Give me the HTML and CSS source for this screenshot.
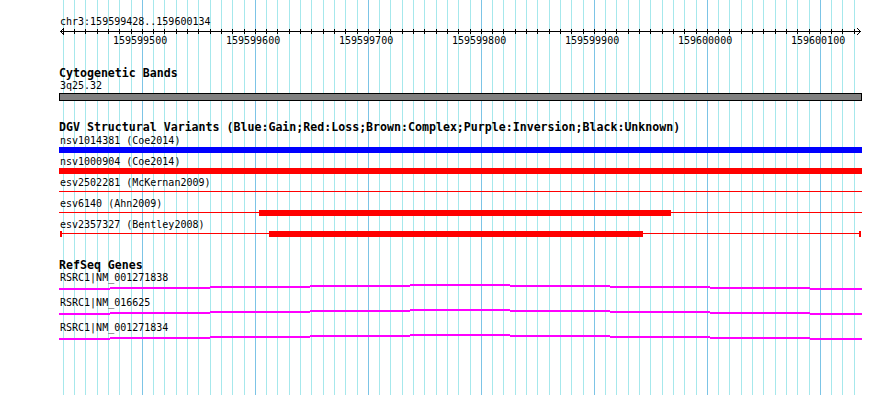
FILE: index.html
```html
<!DOCTYPE html>
<html>
<head>
<meta charset="utf-8">
<link rel="stylesheet" href="styles.css">
</head>
<body>
<div class="panel">
  <svg class="grid" width="890" height="395" shape-rendering="crispEdges">
    <g class="minor">
      <rect x="63" y="0" width="1" height="395"/><rect x="74" y="0" width="1" height="395"/><rect x="85" y="0" width="1" height="395"/><rect x="97" y="0" width="1" height="395"/><rect x="108" y="0" width="1" height="395"/><rect x="119" y="0" width="1" height="395"/><rect x="131" y="0" width="1" height="395"/>
      <rect x="153" y="0" width="1" height="395"/><rect x="164" y="0" width="1" height="395"/><rect x="176" y="0" width="1" height="395"/><rect x="187" y="0" width="1" height="395"/><rect x="198" y="0" width="1" height="395"/><rect x="210" y="0" width="1" height="395"/><rect x="221" y="0" width="1" height="395"/><rect x="232" y="0" width="1" height="395"/><rect x="244" y="0" width="1" height="395"/>
      <rect x="266" y="0" width="1" height="395"/><rect x="277" y="0" width="1" height="395"/><rect x="289" y="0" width="1" height="395"/><rect x="300" y="0" width="1" height="395"/><rect x="311" y="0" width="1" height="395"/><rect x="323" y="0" width="1" height="395"/><rect x="334" y="0" width="1" height="395"/><rect x="345" y="0" width="1" height="395"/><rect x="357" y="0" width="1" height="395"/>
      <rect x="379" y="0" width="1" height="395"/><rect x="390" y="0" width="1" height="395"/><rect x="402" y="0" width="1" height="395"/><rect x="413" y="0" width="1" height="395"/><rect x="424" y="0" width="1" height="395"/><rect x="436" y="0" width="1" height="395"/><rect x="447" y="0" width="1" height="395"/><rect x="458" y="0" width="1" height="395"/><rect x="470" y="0" width="1" height="395"/>
      <rect x="492" y="0" width="1" height="395"/><rect x="503" y="0" width="1" height="395"/><rect x="515" y="0" width="1" height="395"/><rect x="526" y="0" width="1" height="395"/><rect x="537" y="0" width="1" height="395"/><rect x="549" y="0" width="1" height="395"/><rect x="560" y="0" width="1" height="395"/><rect x="571" y="0" width="1" height="395"/><rect x="583" y="0" width="1" height="395"/>
      <rect x="605" y="0" width="1" height="395"/><rect x="616" y="0" width="1" height="395"/><rect x="628" y="0" width="1" height="395"/><rect x="639" y="0" width="1" height="395"/><rect x="650" y="0" width="1" height="395"/><rect x="662" y="0" width="1" height="395"/><rect x="673" y="0" width="1" height="395"/><rect x="684" y="0" width="1" height="395"/><rect x="696" y="0" width="1" height="395"/>
      <rect x="718" y="0" width="1" height="395"/><rect x="729" y="0" width="1" height="395"/><rect x="741" y="0" width="1" height="395"/><rect x="752" y="0" width="1" height="395"/><rect x="763" y="0" width="1" height="395"/><rect x="775" y="0" width="1" height="395"/><rect x="786" y="0" width="1" height="395"/><rect x="797" y="0" width="1" height="395"/><rect x="809" y="0" width="1" height="395"/>
      <rect x="831" y="0" width="1" height="395"/><rect x="842" y="0" width="1" height="395"/><rect x="854" y="0" width="1" height="395"/>
    </g>
    <g class="major">
      <rect x="142" y="0" width="1" height="395"/><rect x="255" y="0" width="1" height="395"/><rect x="368" y="0" width="1" height="395"/><rect x="481" y="0" width="1" height="395"/><rect x="594" y="0" width="1" height="395"/><rect x="707" y="0" width="1" height="395"/><rect x="820" y="0" width="1" height="395"/>
    </g>
  </svg>

  <div class="content">
    <div class="chr">chr3:159599428..159600134</div>
    <svg class="ruler" width="890" height="20" shape-rendering="crispEdges">
      <g class="axis">
        <rect x="60" y="3" width="801" height="1"/>
        <rect x="61" y="2" width="1" height="3"/><rect x="62" y="1" width="1" height="1"/><rect x="62" y="5" width="1" height="1"/><rect x="63" y="0" width="1" height="1"/><rect x="63" y="6" width="1" height="1"/>
        <rect x="859" y="2" width="1" height="3"/><rect x="858" y="1" width="1" height="1"/><rect x="858" y="5" width="1" height="1"/><rect x="857" y="0" width="1" height="1"/><rect x="857" y="6" width="1" height="1"/>
      </g>
      <g class="ticks">
        <rect x="63" y="1" width="1" height="5"/><rect x="74" y="1" width="1" height="5"/><rect x="85" y="1" width="1" height="5"/><rect x="97" y="1" width="1" height="5"/><rect x="108" y="1" width="1" height="5"/><rect x="119" y="1" width="1" height="5"/><rect x="131" y="1" width="1" height="5"/><rect x="142" y="1" width="1" height="5"/>
        <rect x="153" y="1" width="1" height="5"/><rect x="164" y="1" width="1" height="5"/><rect x="176" y="1" width="1" height="5"/><rect x="187" y="1" width="1" height="5"/><rect x="198" y="1" width="1" height="5"/><rect x="210" y="1" width="1" height="5"/><rect x="221" y="1" width="1" height="5"/><rect x="232" y="1" width="1" height="5"/><rect x="244" y="1" width="1" height="5"/><rect x="255" y="1" width="1" height="5"/>
        <rect x="266" y="1" width="1" height="5"/><rect x="277" y="1" width="1" height="5"/><rect x="289" y="1" width="1" height="5"/><rect x="300" y="1" width="1" height="5"/><rect x="311" y="1" width="1" height="5"/><rect x="323" y="1" width="1" height="5"/><rect x="334" y="1" width="1" height="5"/><rect x="345" y="1" width="1" height="5"/><rect x="357" y="1" width="1" height="5"/><rect x="368" y="1" width="1" height="5"/>
        <rect x="379" y="1" width="1" height="5"/><rect x="390" y="1" width="1" height="5"/><rect x="402" y="1" width="1" height="5"/><rect x="413" y="1" width="1" height="5"/><rect x="424" y="1" width="1" height="5"/><rect x="436" y="1" width="1" height="5"/><rect x="447" y="1" width="1" height="5"/><rect x="458" y="1" width="1" height="5"/><rect x="470" y="1" width="1" height="5"/><rect x="481" y="1" width="1" height="5"/>
        <rect x="492" y="1" width="1" height="5"/><rect x="503" y="1" width="1" height="5"/><rect x="515" y="1" width="1" height="5"/><rect x="526" y="1" width="1" height="5"/><rect x="537" y="1" width="1" height="5"/><rect x="549" y="1" width="1" height="5"/><rect x="560" y="1" width="1" height="5"/><rect x="571" y="1" width="1" height="5"/><rect x="583" y="1" width="1" height="5"/><rect x="594" y="1" width="1" height="5"/>
        <rect x="605" y="1" width="1" height="5"/><rect x="616" y="1" width="1" height="5"/><rect x="628" y="1" width="1" height="5"/><rect x="639" y="1" width="1" height="5"/><rect x="650" y="1" width="1" height="5"/><rect x="662" y="1" width="1" height="5"/><rect x="673" y="1" width="1" height="5"/><rect x="684" y="1" width="1" height="5"/><rect x="696" y="1" width="1" height="5"/><rect x="707" y="1" width="1" height="5"/>
        <rect x="718" y="1" width="1" height="5"/><rect x="729" y="1" width="1" height="5"/><rect x="741" y="1" width="1" height="5"/><rect x="752" y="1" width="1" height="5"/><rect x="763" y="1" width="1" height="5"/><rect x="775" y="1" width="1" height="5"/><rect x="786" y="1" width="1" height="5"/><rect x="797" y="1" width="1" height="5"/><rect x="809" y="1" width="1" height="5"/><rect x="820" y="1" width="1" height="5"/>
        <rect x="831" y="1" width="1" height="5"/><rect x="842" y="1" width="1" height="5"/><rect x="854" y="1" width="1" height="5"/>
      </g>
      <g class="ticklabels">
        <text x="113" y="16">159599500</text>
        <text x="226" y="16">159599600</text>
        <text x="339" y="16">159599700</text>
        <text x="452" y="16">159599800</text>
        <text x="565" y="16">159599900</text>
        <text x="678" y="16">159600000</text>
        <text x="791" y="16">159600100</text>
      </g>
    </svg>

    <div class="track cyto">
      <div class="title">Cytogenetic Bands</div>
      <div class="label">3q25.32</div>
      <div class="band"></div>
    </div>

    <div class="track dgv">
      <div class="title">DGV Structural Variants (Blue:Gain;Red:Loss;Brown:Complex;Purple:Inversion;Black:Unknown)</div>
      <div class="feat">
        <div class="label">nsv1014381 (Coe2014)</div>
        <div class="lane"><div class="bar gain" style="margin-left:0px;width:803px"></div></div>
      </div>
      <div class="feat">
        <div class="label">nsv1000904 (Coe2014)</div>
        <div class="lane"><div class="bar loss" style="margin-left:0px;width:803px"></div></div>
      </div>
      <div class="feat">
        <div class="label">esv2502281 (McKernan2009)</div>
        <div class="lane thin"></div>
      </div>
      <div class="feat">
        <div class="label">esv6140 (Ahn2009)</div>
        <div class="lane thin"><div class="bar loss" style="margin-left:200px;width:412px"></div></div>
      </div>
      <div class="feat">
        <div class="label">esv2357327 (Bentley2008)</div>
        <div class="lane capped"><div class="bar loss" style="margin-left:210px;width:374px"></div></div>
      </div>
    </div>

    <div class="track refseq">
      <div class="title">RefSeq Genes</div>
      <div class="gene">
        <div class="label">RSRC1|NM_001271838</div>
        <svg class="model" width="803" height="14" shape-rendering="crispEdges">
          <rect x="0" y="5" width="51" height="2"/><rect x="51" y="4" width="100" height="2"/><rect x="151" y="3" width="100" height="2"/><rect x="251" y="2" width="100" height="2"/><rect x="351" y="1" width="100" height="2"/><rect x="451" y="2" width="100" height="2"/><rect x="551" y="3" width="100" height="2"/><rect x="651" y="4" width="100" height="2"/><rect x="751" y="5" width="52" height="2"/>
        </svg>
      </div>
      <div class="gene">
        <div class="label">RSRC1|NM_016625</div>
        <svg class="model" width="803" height="14" shape-rendering="crispEdges">
          <rect x="0" y="5" width="51" height="2"/><rect x="51" y="4" width="100" height="2"/><rect x="151" y="3" width="100" height="2"/><rect x="251" y="2" width="100" height="2"/><rect x="351" y="1" width="100" height="2"/><rect x="451" y="2" width="100" height="2"/><rect x="551" y="3" width="100" height="2"/><rect x="651" y="4" width="100" height="2"/><rect x="751" y="5" width="52" height="2"/>
        </svg>
      </div>
      <div class="gene">
        <div class="label">RSRC1|NM_001271834</div>
        <svg class="model" width="803" height="14" shape-rendering="crispEdges">
          <rect x="0" y="5" width="51" height="2"/><rect x="51" y="4" width="100" height="2"/><rect x="151" y="3" width="100" height="2"/><rect x="251" y="2" width="100" height="2"/><rect x="351" y="1" width="100" height="2"/><rect x="451" y="2" width="100" height="2"/><rect x="551" y="3" width="100" height="2"/><rect x="651" y="4" width="100" height="2"/><rect x="751" y="5" width="52" height="2"/>
        </svg>
      </div>
    </div>
  </div>
</div>
</body>
</html>
```
FILE: styles.css
```css
html, body {
  margin: 0;
  padding: 0;
  background: #ffffff;
}

body {
  font-family: "DejaVu Sans Mono", "Liberation Mono", monospace;
  color: #000000;
}

.panel {
  position: relative;
  width: 890px;
  height: 395px;
  overflow: hidden;
}

.grid {
  position: absolute;
  left: 0;
  top: 0;
  display: block;
}

.grid .minor {
  fill: #a6e8ec;
}

.grid .major {
  fill: #7cc4e6;
}

.content {
  position: relative;
  padding-top: 15px;
}

.chr {
  padding-left: 60px;
  font-size: 10px;
  line-height: 13px;
  height: 13px;
  white-space: nowrap;
}

.ruler {
  display: block;
}

.ruler .axis,
.ruler .ticks {
  fill: #000000;
}

.ruler .ticklabels {
  font-family: "DejaVu Sans Mono", "Liberation Mono", monospace;
  font-size: 10px;
  fill: #000000;
}

.track {
  padding-left: 59px;
}

.title {
  font-weight: bold;
  font-size: 11.6px;
  line-height: 14px;
  height: 14px;
  white-space: nowrap;
}

.label {
  font-size: 10px;
  line-height: 11px;
  height: 11px;
  padding-left: 1px;
  white-space: nowrap;
}

.cyto {
  margin-top: 18px;
}

.band {
  margin-top: 2px;
  width: 803px;
  height: 8px;
  box-sizing: border-box;
  border: 1px solid #000000;
  background: #808080;
}

.dgv {
  margin-top: 19px;
}

.dgv .title {
  margin-bottom: 1px;
}

.feat {
  height: 21px;
}

.lane {
  display: flex;
  margin-top: 1px;
  width: 803px;
  height: 6px;
}

.lane.thin {
  background: linear-gradient(#ff0000, #ff0000) 0 2px / 803px 1px no-repeat;
}

.lane.capped {
  background:
    linear-gradient(#ff0000, #ff0000) 1px 0 / 2px 6px no-repeat,
    linear-gradient(#ff0000, #ff0000) 800px 0 / 2px 6px no-repeat,
    linear-gradient(#ff0000, #ff0000) 1px 2px / 801px 1px no-repeat;
}

.bar {
  height: 6px;
  flex: none;
}

.bar.gain {
  background: #0000ff;
}

.bar.loss {
  background: #ff0000;
}

.refseq {
  margin-top: 18px;
}

.gene {
  height: 25px;
}

.model {
  display: block;
  fill: #ff00ff;
}
```
